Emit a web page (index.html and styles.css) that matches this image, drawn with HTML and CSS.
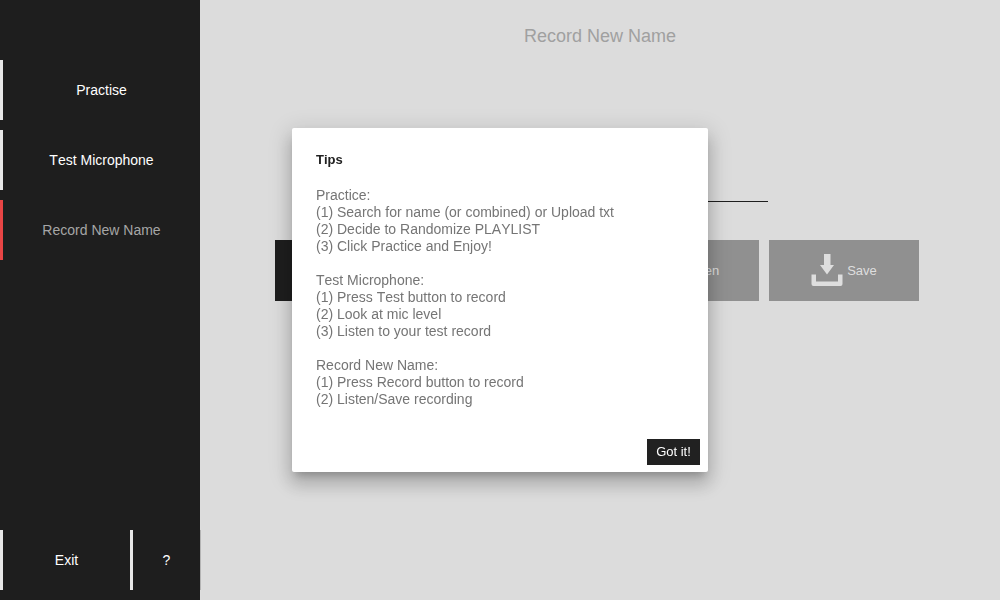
FILE: index.html
```html
<!DOCTYPE html>
<html lang="en">
<head>
<meta charset="utf-8">
<meta name="viewport" content="width=device-width, initial-scale=1">
<title>Record New Name</title>
<link rel="stylesheet" href="styles.css">
</head>
<body>
<div class="app">
  <aside class="sidebar">
    <nav class="nav">
      <button class="nav-item" type="button">Practise</button>
      <button class="nav-item" type="button">Test Microphone</button>
      <button class="nav-item nav-item-current" type="button" aria-current="page">Record New Name</button>
    </nav>
    <div class="sidebar-footer">
      <button class="nav-item exit" type="button">Exit</button>
      <button class="nav-item help" type="button" aria-label="Help">?</button>
    </div>
  </aside>
  <main class="main">
    <h1 class="title">Record New Name</h1>
    <div class="recorder">
      <input class="name-input" type="text" aria-label="Name">
      <div class="actions">
        <button class="action action-record" type="button">Record</button>
        <button class="action" type="button" disabled>
          <svg class="icon" viewBox="0 0 32 32" aria-hidden="true"><path d="M8 4l18 12L8 28z"/></svg>
          Listen
        </button>
        <button class="action" type="button" disabled>
          <svg class="icon" viewBox="0 0 32 32" aria-hidden="true"><path d="M13 0h6.500v11H23l-7 9.500L9 11h4zM.5 20.500H5V27.500h22v-7h4.500V30q0 2-2 2h-27q-2 0-2-2z"/></svg>
          Save
        </button>
      </div>
    </div>
  </main>
</div>
<div class="overlay">
  <section class="dialog" role="dialog" aria-modal="true" aria-labelledby="tips-title">
    <h2 class="dialog-title" id="tips-title">Tips</h2>
    <div class="dialog-body">
      <p class="tips">Practice:<br>(1) Search for name (or combined) or Upload txt<br>(2) Decide to Randomize PLAYLIST<br>(3) Click Practice and Enjoy!</p>
      <p class="tips">Test Microphone:<br>(1) Press Test button to record<br>(2) Look at mic level<br>(3) Listen to your test record</p>
      <p class="tips">Record New Name:<br>(1) Press Record button to record<br>(2) Listen/Save recording</p>
    </div>
    <div class="dialog-actions">
      <button class="confirm" type="button">Got it!</button>
    </div>
  </section>
</div>
</body>
</html>
```

FILE: styles.css
```css
* {
  box-sizing: border-box;
}

body {
  margin: 0;
  background: #dcdcdc;
  font-family: "Liberation Sans", Arial, sans-serif;
  font-size: 14px;
  font-kerning: none;
}

button,
input {
  font: inherit;
  font-kerning: none;
}

.app {
  display: flex;
  min-height: 100vh;
}

.sidebar {
  display: flex;
  flex-direction: column;
  justify-content: space-between;
  width: 200px;
  padding: 60px 0 10px;
  background: #1e1e1e;
}

.nav {
  display: flex;
  flex-direction: column;
  gap: 10px;
}

.nav-item {
  height: 60px;
  padding: 0;
  border: 0;
  border-left: 3px solid #e8e8e8;
  background: #1e1e1e;
  color: #fff;
}

.nav-item-current {
  border-left-color: #e84545;
  color: #a6a6a6;
}

.sidebar-footer {
  display: flex;
}

.exit {
  width: 130px;
}

.help {
  flex: 1;
  box-shadow: 1px 0 #b4b4b4;
}

.main {
  flex: 1;
  display: flex;
  flex-direction: column;
  align-items: center;
  padding: 24px 20px;
}

.title {
  margin: 0;
  color: #a0a0a0;
  font-size: 18px;
  font-weight: 400;
  line-height: 24px;
}

.recorder {
  display: flex;
  flex-direction: column;
  align-items: center;
  width: 100%;
  max-width: 650px;
  margin-top: 114px;
  padding-right: 6px;
}

.name-input {
  width: 342px;
  height: 40px;
  border: 0;
  border-bottom: 1px solid #1e1e1e;
  background: transparent;
}

.actions {
  display: flex;
  gap: 10px;
  width: 100%;
  margin-top: 38px;
}

.action {
  display: flex;
  align-items: center;
  justify-content: center;
  gap: 4px;
  width: 150px;
  height: 61px;
  padding: 0 0 1px;
  border: 0;
  background: #909090;
  color: #dedede;
  font-size: 13px;
}

.action-record {
  flex: 1;
  background: #1e1e1e;
  color: #fff;
}

.icon {
  width: 32px;
  height: 32px;
  fill: #dedede;
}

.overlay {
  position: fixed;
  inset: 0;
  display: grid;
  place-items: center;
}

.dialog {
  width: 416px;
  max-width: 100%;
  border-radius: 2px;
  background: #fff;
  box-shadow: 0 7px 8px -4px rgba(0, 0, 0, 0.2), 0 12px 17px 2px rgba(0, 0, 0, 0.14), 0 5px 22px 4px rgba(0, 0, 0, 0.12);
}

.dialog-title {
  margin: 0;
  padding: 24px 24px 19px;
  color: #212121;
  font-size: 13px;
  line-height: 16px;
}

.dialog-body {
  padding: 0 24px 31px;
  color: #757575;
  line-height: 17px;
}

.tips {
  margin: 0 0 17px;
}

.tips:last-child {
  margin: 0;
}

.dialog-actions {
  display: flex;
  justify-content: flex-end;
  padding: 0 8px 7px;
}

.confirm {
  width: 53px;
  height: 26px;
  padding: 0 0 1px;
  border: 0;
  background: #212121;
  color: #fff;
  font-size: 13px;
}
```
